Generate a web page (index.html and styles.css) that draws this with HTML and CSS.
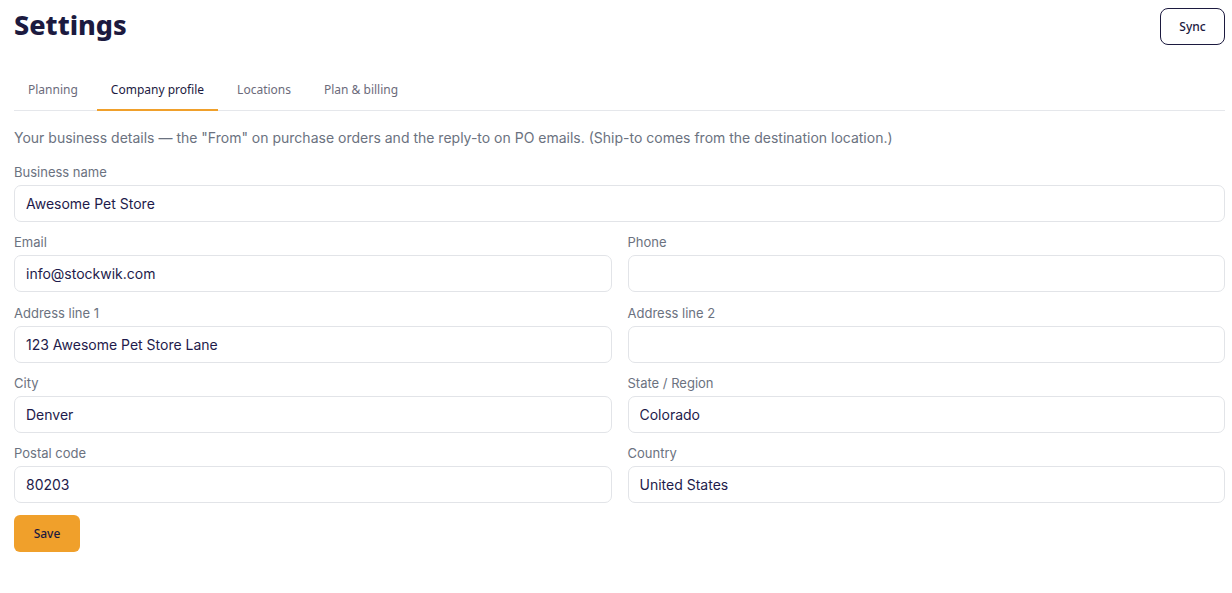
FILE: index.html
```html
<!DOCTYPE html>
<html lang="en">
<head>
    <meta charset="UTF-8">
    <meta name="viewport" content="width=device-width, initial-scale=1.0">
    <title>Settings</title>
    <link rel="stylesheet" href="styles.css">
</head>
<body>
    <div class="page">
        <header class="page-header">
            <h1>Settings</h1>
            <button class="btn-outline">Sync</button>
        </header>

        <nav class="tabs">
            <a class="tab">Planning</a>
            <a class="tab active">Company profile</a>
            <a class="tab">Locations</a>
            <a class="tab">Plan &amp; billing</a>
        </nav>

        <p class="intro">Your business details — the "From" on purchase orders and the reply-to on PO emails. (Ship-to comes from the destination location.)</p>

        <form class="profile-form">
            <div class="field full">
                <label>Business name</label>
                <input type="text" value="Awesome Pet Store">
            </div>
            <div class="field">
                <label>Email</label>
                <input type="text" value="info@stockwik.com">
            </div>
            <div class="field">
                <label>Phone</label>
                <input type="text" value="">
            </div>
            <div class="field">
                <label>Address line 1</label>
                <input type="text" value="123 Awesome Pet Store Lane">
            </div>
            <div class="field">
                <label>Address line 2</label>
                <input type="text" value="">
            </div>
            <div class="field">
                <label>City</label>
                <input type="text" value="Denver">
            </div>
            <div class="field">
                <label>State / Region</label>
                <input type="text" value="Colorado">
            </div>
            <div class="field">
                <label>Postal code</label>
                <input type="text" value="80203">
            </div>
            <div class="field">
                <label>Country</label>
                <input type="text" value="United States">
            </div>
            <div class="actions">
                <button type="button" class="btn-primary">Save</button>
            </div>
        </form>
    </div>
</body>
</html>
```

FILE: styles.css
```css
body {
    margin: 0;
    padding: 0;
    background-color: #fff;
    font-family: Inter, "Noto Sans", sans-serif;
    color: #1e1b4b;
}

.page {
    padding: 8px 7px 20px 14px;
}

/* Header */
.page-header {
    display: flex;
    justify-content: space-between;
    align-items: center;
}

.page-header h1 {
    margin: 0;
    margin-top: -4px;
    font-family: "Noto Sans", Inter, sans-serif;
    font-size: 27px;
    font-weight: 800;
    line-height: 36px;
    color: #1c1a3f;
}

.btn-outline {
    height: 37px;
    width: 65px;
    background: #fff;
    border: 1px solid #1c1a3f;
    border-radius: 8px;
    font-family: "Noto Sans", sans-serif;
    font-size: 12px;
    font-weight: 500;
    color: #1c1a3f;
    cursor: pointer;
}

/* Tabs */
.tabs {
    display: flex;
    gap: 5px;
    margin-top: 25px;
    border-bottom: 1px solid #e5e7eb;
}

.tab {
    padding: 10px 14px 9px;
    font-family: "Noto Sans", sans-serif;
    font-size: 12px;
    line-height: 20px;
    color: #6b6b7b;
    border-bottom: 2px solid transparent;
    margin-bottom: -1px;
    cursor: pointer;
}

.tab.active {
    color: #1c1a3f;
    border-bottom-color: #f0a02b;
}

.intro {
    margin: 17px 0 15px;
    font-size: 14px;
    line-height: 20px;
    color: #6b7280;
}

/* Form */
.profile-form {
    display: grid;
    grid-template-columns: 1fr 1fr;
    column-gap: 16px;
    row-gap: 11.3px;
}

.field {
    display: flex;
    flex-direction: column;
    gap: 4px;
}

.field.full {
    grid-column: 1 / -1;
}

.field label {
    font-size: 13px;
    line-height: 18px;
    color: #6b7280;
}

.field input {
    height: 37px;
    box-sizing: border-box;
    padding: 0 11px;
    border: 1px solid #e2e4e8;
    border-radius: 7px;
    font-family: Inter, sans-serif;
    font-size: 14px;
    color: #1e1b4b;
    outline: none;
}

.actions {
    grid-column: 1 / -1;
    margin-top: 1px;
}

.btn-primary {
    height: 37px;
    width: 66px;
    background-color: #f0a02b;
    border: none;
    border-radius: 6px;
    font-family: "Noto Sans", sans-serif;
    font-size: 12px;
    font-weight: 500;
    color: #1c1a3f;
    cursor: pointer;
}
```
